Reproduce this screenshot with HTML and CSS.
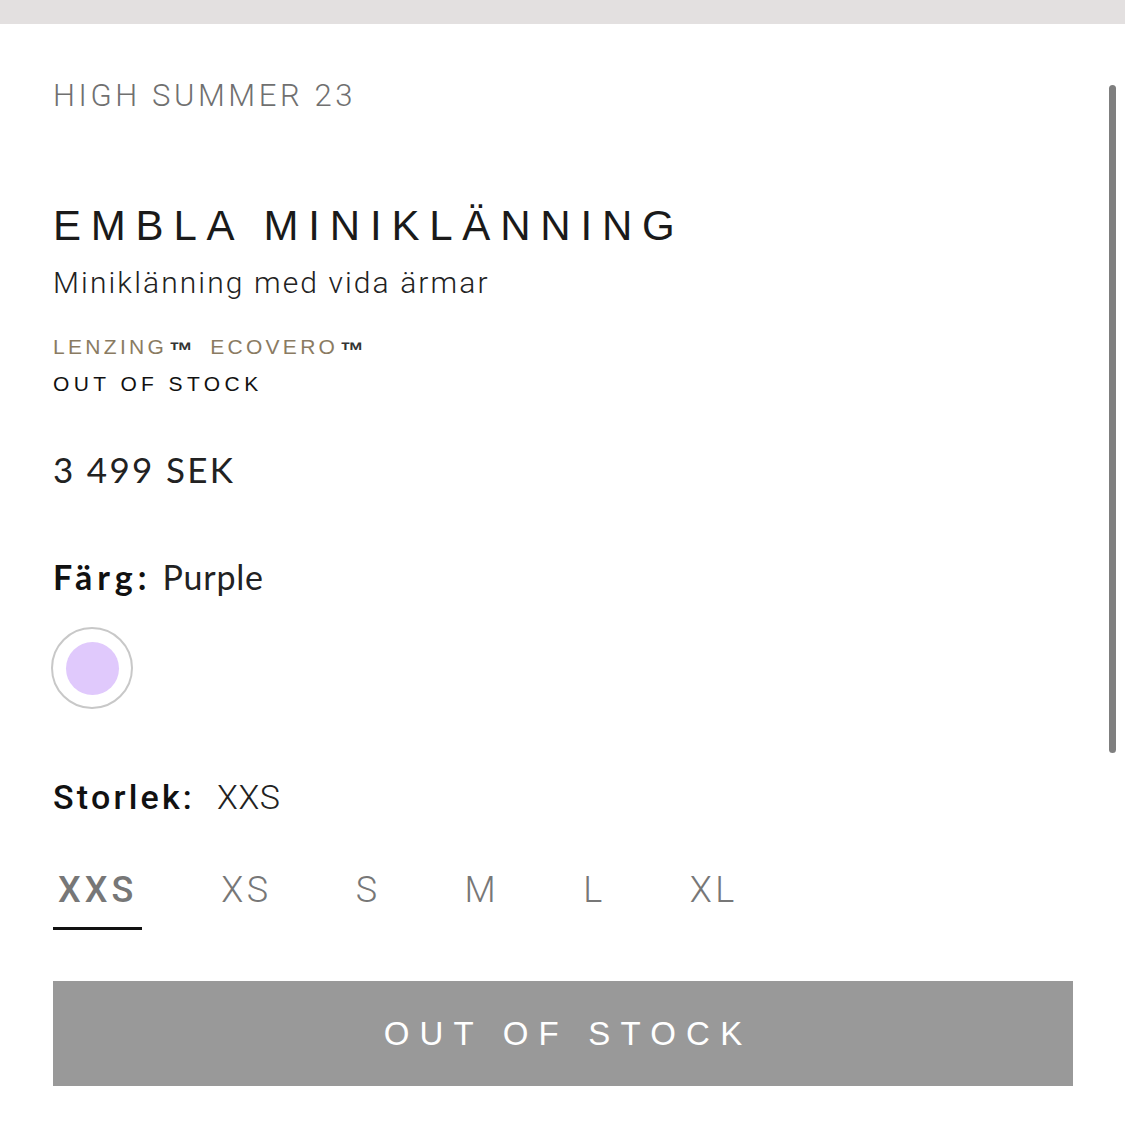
FILE: index.html
```html
<!DOCTYPE html>
<html lang="sv">
<head>
<meta charset="utf-8">
<title>Embla miniklänning</title>
<link rel="stylesheet" href="styles.css">
</head>
<body>
<div class="topbar"></div>
<div class="scrollbar"></div>
<main class="content">
  <div class="collection">HIGH SUMMER 23</div>
  <h1 class="title">EMBLA MINIKLÄNNING</h1>
  <p class="subtitle">Miniklänning med vida ärmar</p>
  <div class="material"><span>LENZING</span><b>™</b><span class="gap"></span><span>ECOVERO</span><b>™</b></div>
  <div class="stock">OUT OF STOCK</div>
  <div class="price">3 499 SEK</div>
  <div class="label color-label"><strong>Färg:</strong>Purple</div>
  <div class="swatch"><span class="swatch-dot"></span></div>
  <div class="label size-label"><strong>Storlek:</strong>XXS</div>
  <div class="sizes">
    <span class="size active">XXS</span>
    <span class="size">XS</span>
    <span class="size">S</span>
    <span class="size">M</span>
    <span class="size">L</span>
    <span class="size">XL</span>
  </div>
  <button class="cta">OUT OF STOCK</button>
</main>
</body>
</html>
```
FILE: styles.css
```css
html, body {
  margin: 0;
  padding: 0;
  background: #fff;
}
body {
  font-family: "Lato", "Liberation Sans", sans-serif;
  color: #111;
  position: relative;
  height: 1125px;
  overflow: hidden;
}
.topbar {
  height: 24px;
  background: #e3e0e0;
}
.scrollbar {
  position: absolute;
  left: 1109px;
  top: 85px;
  width: 7px;
  height: 668px;
  border-radius: 4px;
  background: #7f7f7f;
}
.content {
  padding: 0 52px 0 53px;
  display: flex;
  flex-direction: column;
  align-items: flex-start;
}
.collection {
  margin-top: 52px;
  font-family: "Roboto", sans-serif;
  font-weight: 300;
  font-size: 31px;
  line-height: 40px;
  letter-spacing: 3.6px;
  color: #707070;
}
.title {
  margin: 84px 0 0;
  font-family: "Liberation Sans", sans-serif;
  font-weight: 400;
  font-size: 42px;
  line-height: 52px;
  letter-spacing: 9.8px;
  color: #1a1a1a;
}
.subtitle {
  margin: 13px 0 0;
  font-family: "Roboto", sans-serif;
  font-weight: 300;
  font-size: 30px;
  line-height: 36px;
  letter-spacing: 2.1px;
  color: #222;
}
.material {
  margin-top: 31px;
  display: flex;
  align-items: baseline;
  font-family: "Liberation Sans", sans-serif;
  font-size: 21px;
  line-height: 28px;
  letter-spacing: 3.3px;
  color: #8a7b62;
}
.material b {
  color: #333;
  font-size: 24px;
  letter-spacing: 0;
  margin-left: 2px;
  position: relative;
  top: 5px;
}
.material .gap {
  width: 17px;
}
.stock {
  margin-top: 9px;
  font-family: "Liberation Sans", sans-serif;
  font-size: 21px;
  line-height: 28px;
  letter-spacing: 4.4px;
  color: #111;
}
.price {
  margin-top: 49px;
  font-family: "Lato", sans-serif;
  font-weight: 400;
  font-size: 35px;
  line-height: 44px;
  letter-spacing: 2.3px;
  color: #222;
}
.label {
  font-size: 34px;
  line-height: 44px;
  color: #222;
}
.label strong {
  color: #111;
}
.color-label {
  margin-top: 64px;
  font-family: "Lato", sans-serif;
  letter-spacing: 0.8px;
}
.color-label strong {
  font-weight: 700;
  letter-spacing: 5px;
  margin-right: 11px;
}
.swatch {
  margin: 28px 0 0 -2px;
  width: 78px;
  height: 78px;
  border: 2px solid #c8c8c8;
  border-radius: 50%;
  display: flex;
  align-items: center;
  justify-content: center;
}
.swatch-dot {
  width: 53px;
  height: 53px;
  border-radius: 50%;
  background: #e0c9fc;
}
.size-label {
  margin-top: 66px;
  font-family: "Roboto", sans-serif;
  font-weight: 300;
  letter-spacing: 0.6px;
}
.size-label strong {
  font-weight: 500;
  letter-spacing: 3.2px;
  margin-right: 22px;
}
.sizes {
  margin-top: 49px;
  display: flex;
  gap: 74px;
}
.size {
  padding: 0 5px 15px;
  font-family: "Roboto", sans-serif;
  font-weight: 300;
  font-size: 36px;
  line-height: 44px;
  letter-spacing: 3.5px;
  color: #777;
  border-bottom: 3px solid transparent;
}
.size.active {
  font-weight: 500;
  letter-spacing: 4px;
  border-bottom-color: #111;
}
.cta {
  margin-top: 51px;
  align-self: stretch;
  height: 105px;
  border: 0;
  background: #999;
  color: #fff;
  font-family: "Liberation Sans", sans-serif;
  font-weight: 400;
  font-size: 33px;
  letter-spacing: 10.2px;
  padding: 0 0 0 10px;
}
```
